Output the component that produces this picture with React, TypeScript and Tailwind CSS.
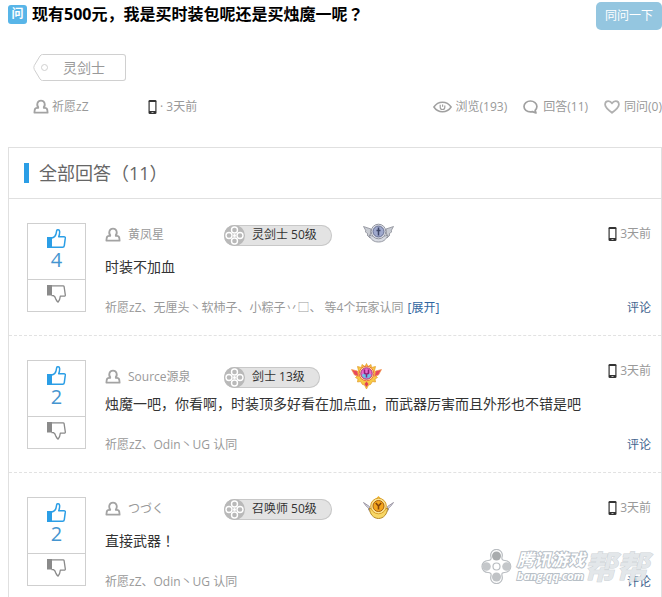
import type { ReactNode } from 'react';

type MedalKind = 'silver' | 'ruby' | 'gold';

interface Answer {
  id: number;
  author: string;
  role: string;
  medal: MedalKind;
  likes: number;
  content: string;
  agreed: string;
  expandable?: boolean;
}

const answers: Answer[] = [
  {
    id: 1,
    author: '黄凤星',
    role: '灵剑士 50级',
    medal: 'silver',
    likes: 4,
    content: '时装不加血',
    agreed: '祈愿zZ、无厘头丶软柿子、小粽子丷□、 等4个玩家认同',
    expandable: true,
  },
  {
    id: 2,
    author: 'Source源泉',
    role: '剑士 13级',
    medal: 'ruby',
    likes: 2,
    content: '烛魔一吧，你看啊，时装顶多好看在加点血，而武器厉害而且外形也不错是吧',
    agreed: '祈愿zZ、Odin丶UG 认同',
  },
  {
    id: 3,
    author: 'つづく',
    role: '召唤师 50级',
    medal: 'gold',
    likes: 2,
    content: '直接武器！',
    agreed: '祈愿zZ、Odin丶UG 认同',
  },
];

// Closing ！ and ？ are centred in their cell, which only the TC face does
function Centred({ text }: { text: string }) {
  return text.split(/([！？])/).map((part, i) =>
    i % 2 === 1 ? (
      <span key={i} lang="zh-TW" className="font-['Noto_Sans_CJK_TC',sans-serif] leading-none">{part}</span>
    ) : (
      part
    )
  );
}

function UserIcon() {
  return (
    <svg width="16" height="16" viewBox="0 0 16 16" fill="none" stroke="#a3a3a3" strokeWidth="1.800" strokeLinejoin="round" className="shrink-0">
      <path d="M5.600 9C4.300 7.700 3.900 6 4.500 4.100 5 2.500 6.200 1.600 8 1.600s3 .9 3.500 2.500c.6 1.900.2 3.600-1.100 4.900" />
      <path d="M5.800 8.900H4.200c-1.500 0-2.300.8-2.500 2.100l-.3 2.700h13.200l-.3-2.700c-.2-1.300-1-2.100-2.500-2.100h-1.600" />
    </svg>
  );
}

function PhoneIcon() {
  return (
    <svg width="9" height="14" viewBox="0 0 9 14" className="shrink-0">
      <rect x="0.5" y="0" width="8" height="14" rx="1.3" fill="#333" />
      <rect x="1.7" y="2" width="5.6" height="9" fill="#fff" />
      <rect x="3.5" y="12" width="2" height="1" fill="#bbb" />
    </svg>
  );
}

function EyeIcon() {
  return (
    <svg width="19" height="12" viewBox="0 0 19 12" fill="none" stroke="#a0a0a0" strokeWidth="1.5">
      <path d="M.9 6C3 2.800 6 1.200 9.500 1.200S16 2.800 18.100 6C16 9.200 13 10.800 9.500 10.800S3 9.200.9 6Z" />
      <path d="M7.200 3.800v2.400a2.300 2.300 0 0 0 4.600 0V4.400M9.600 3.600v2.200" strokeWidth="1.2" />
    </svg>
  );
}

function ChatIcon() {
  return (
    <svg width="16" height="14" viewBox="0 0 16 14" fill="none" stroke="#a0a0a0" strokeWidth="1.700" strokeLinejoin="round">
      <path d="M9.300 11.600C8.700 11.800 8.100 11.900 7.400 11.900 3.900 11.900 1 9.500 1 6.400S3.900 1 7.400 1s6.500 2.400 6.500 5.400c0 1.600-.7 2.900-1.800 3.900l.9 2.700Z" />
    </svg>
  );
}

function HeartIcon() {
  return (
    <svg width="16" height="14" viewBox="0 0 16 14" fill="none" stroke="#b0b0b0" strokeWidth="1.800" strokeLinejoin="round">
      <path d="M8 12.800C4.400 10.200 1.100 7.700 1.100 4.600 1.100 2.500 2.600 1.100 4.400 1.100 6 1.100 7.200 2 8 3.400 8.800 2 10 1.100 11.600 1.100c1.800 0 3.300 1.400 3.300 3.500 0 3.100-3.300 5.600-6.900 8.200Z" />
    </svg>
  );
}

function ThumbUpIcon() {
  return (
    <svg width="19" height="19" viewBox="0 0 19 19">
      <rect x="0" y="8" width="5" height="11" fill="#2b9ee6" />
      <path
        d="M5 9c2.200-.6 3.700-2.200 4.100-4.300L9.700 1.600C9.900.6 12.400.4 12.600 2.300c.2 1.700-.2 3.700-.9 5.400h5.300c1 0 1.400.6 1.300 1.500l-1 7.400c-.1.900-.7 1.600-1.700 1.600H5"
        fill="none"
        stroke="#2b9ee6"
        strokeWidth="1.500"
        strokeLinejoin="round"
      />
    </svg>
  );
}

function ThumbDownIcon() {
  return (
    <svg width="19" height="18" viewBox="0 0 19 18">
      <rect x="0" y="0" width="5" height="10.500" fill="#8a8a8a" />
      <path
        d="M4.500.8h11.600c.6 0 .9.200 1 .8l1.200 8.300c.1.800-.3 1.300-1.200 1.300h-3.800c-.2 2.400-.9 4.400-2.200 5.900-1-.7-1.800-1.500-2.200-2.800-.4-1.700-1.200-3-2.400-3.600H4.500"
        fill="none"
        stroke="#8a8a8a"
        strokeWidth="1.300"
        strokeLinejoin="round"
      />
    </svg>
  );
}

function RoleIcon() {
  return (
    <svg width="21" height="21" viewBox="0 0 21 21" className="shrink-0">
      <circle cx="10.500" cy="10.500" r="10.500" fill="#b9b9b9" />
      <g fill="#b9b9b9" stroke="#fff" strokeWidth="1.400">
        <circle cx="10.500" cy="5" r="3" />
        <circle cx="5" cy="10.500" r="3" />
        <circle cx="16" cy="10.500" r="3" />
        <circle cx="10.500" cy="16" r="3" />
      </g>
      <circle cx="10.500" cy="10.500" r="1.500" fill="#fff" />
    </svg>
  );
}

function Medal({ kind }: { kind: MedalKind }) {
  if (kind === 'silver') {
    return (
      <svg width="31" height="28" viewBox="0 0 31 28">
        <path d="M.5 5.500 8 8l-1 9-3-3 1-1-3-2.500 1-.5Z" fill="#c9ccd3" stroke="#8b8e98" strokeWidth=".8" />
        <path d="M30.500 5.500 23 8l1 9 3-3-1-1 3-2.500-1-.5Z" fill="#c9ccd3" stroke="#8b8e98" strokeWidth=".8" />
        <path d="M6 14c2 5 5 7 9.500 7s7.500-2 9.500-7l-3 1H9Z" fill="#d8dbe2" stroke="#8f929c" strokeWidth=".9" />
        <circle cx="15.500" cy="10.500" r="7.300" fill="#e4e6ec" stroke="#90939f" />
        <circle cx="15.500" cy="10.500" r="5.500" fill="#9fa9cd" stroke="#656d8f" />
        <path d="M15.500 6.500v8M13.500 9.500h4" stroke="#3c4566" strokeWidth="1.500" />
      </svg>
    );
  }
  if (kind === 'ruby') {
    return (
      <svg width="31" height="28" viewBox="0 0 31 28">
        <path
          d="m15.500.5 1.500 3 3-2 .5 3 4-1-1 4 3 3-2 2 2 2-2.500 1.500.5 3-3-.5-2 3-2 .5-2 4-2-4-2-.5-2-3-3 .5.500-3L4.500 14.500l2-2-2-2 3-3-1-4 4 1 .5-3 3 2Z"
          fill="#f6c945"
          stroke="#e49a24"
          strokeWidth=".7"
        />
        <path d="m.5 6.500 6 1.500 1 5.500-4-1.500Z" fill="#e8485c" stroke="#f3a04a" strokeWidth=".7" />
        <path d="m30.500 6.500-6 1.500-1 5.500 4-1.500Z" fill="#e8485c" stroke="#f3a04a" strokeWidth=".7" />
        <circle cx="15.500" cy="10.500" r="7.300" fill="#ffe99a" stroke="#ed6f44" />
        <circle cx="15.500" cy="10.500" r="5.700" fill="#e86acb" stroke="#a5367f" />
        <path d="M10.800 12a5 5 0 0 0 9.400 0l-2-1.500h-5.400Z" fill="#6cc5e8" />
        <path d="M13.500 6.500v3q0 1.500 2 1.500t2-1.500v-3M15.500 11v3.500" fill="none" stroke="#8e2277" strokeWidth="1.500" />
        <path d="m15.500 18.500 2 2.500-2 3-2-3Z" fill="#e23e55" />
      </svg>
    );
  }
  return (
    <svg width="31" height="28" viewBox="0 0 31 28">
      <path d="m.5 7.500 6 4 2 6-3-2.500v-2l-2-1.500Z" fill="#d9d9e4" stroke="#8d8796" strokeWidth=".8" />
      <path d="m30.500 7.500-6 4-2 6 3-2.500v-2l2-1.500Z" fill="#d9d9e4" stroke="#8d8796" strokeWidth=".8" />
      <path d="M6.500 13c0 6 4 10.500 9 10.500s9-4.500 9-10.500l-4 2H10Z" fill="#f7d765" stroke="#b78a27" />
      <path d="m15.500 1 2.500 2.500h-5Z" fill="#f0b52c" />
      <circle cx="15.500" cy="11" r="7.800" fill="#fbe391" stroke="#d99f2b" />
      <circle cx="15.500" cy="11" r="5.500" fill="#f4a51e" stroke="#a8600f" />
      <path d="m12.800 8 2.700 3 2.700-3M15.500 11v3.500" fill="none" stroke="#84460b" strokeWidth="1.600" />
    </svg>
  );
}

function Stat({ icon, children }: { icon: ReactNode; children: ReactNode }) {
  return (
    <span className="flex items-center gap-1">
      {icon}
      {children}
    </span>
  );
}

function VoteBox({ likes }: { likes: number }) {
  return (
    <div className="flex h-[89px] w-[59px] shrink-0 flex-col border border-[#cfcfcf]">
      <button type="button" aria-label="赞同" className="flex h-14 flex-col items-center border-b border-[#cfcfcf] pt-[5px] text-xl leading-6 text-[#4595d0]">
        <ThumbUpIcon />
        {likes}
      </button>
      <button type="button" aria-label="反对" className="flex grow justify-center pt-[5px]">
        <ThumbDownIcon />
      </button>
    </div>
  );
}

function AnswerItem({ answer }: { answer: Answer }) {
  return (
    <li className="flex h-[137px] border-b border-dashed border-[#e2e2e2] pr-[10px] pl-[18px]">
      <div className="pt-6">
        <VoteBox likes={answer.likes} />
      </div>
      <div className="ml-[19px] min-w-0 grow pt-4">
        <div className="flex h-10 justify-between">
          <div className={answer.medal === 'ruby' ? 'flex items-center pt-[10px]' : 'flex items-center'}>
            <div className="flex w-[119px] items-center gap-[7px] text-[#999]">
              <UserIcon />
              {answer.author}
            </div>
            <div className="mr-[31px] flex h-[21px] items-center gap-[7px] rounded-full bg-[#e3e3e3] pr-[15px] text-[#333] ring-1 ring-[#c8c8c8] ring-inset">
              <RoleIcon />
              {answer.role}
            </div>
            <Medal kind={answer.medal} />
          </div>
          <div className="flex h-[38px] items-center gap-[3px] text-[#999]">
            <PhoneIcon />
            3天前
          </div>
        </div>
        <p className="h-6 text-sm leading-6 text-[#333]">
          <Centred text={answer.content} />
        </p>
        <div className="mt-[19px] flex justify-between leading-5 text-[#999]">
          <p>
            {answer.agreed}
            {answer.expandable && (
              <a href="#expand" className="ml-1 text-[#2f65a0]">[展开]</a>
            )}
          </p>
          <a href="#comment" className="text-[#44658f]">评论</a>
        </div>
      </div>
    </li>
  );
}

function Watermark() {
  return (
    <div className="pointer-events-none absolute right-[14px] bottom-[13px] flex items-center gap-[3px]">
      <svg width="35" height="35" viewBox="0 0 35 35">
        <g fill="#fff" stroke="#b9bdc1" strokeWidth="1.200">
          <path d="M12 8a5.800 5.800 0 1 1 11 0c-.5 2.500.5 3.500 3 3.500a6 6 0 1 1-.5 12c-2 0-3 .5-2.500 3.500a5.800 5.800 0 1 1-11 0c.5-2.500-.5-3.500-3-3.500a6 6 0 1 1 0-12c2.500 0 3.500-1 3-3.500Z" />
          <circle cx="17.500" cy="17.500" r="3.500" />
        </g>
        <circle cx="17.500" cy="7" r="4.500" fill="#a9acae" />
        <circle cx="7.500" cy="17.500" r="4.300" fill="#c4c7ca" />
        <circle cx="27.500" cy="17.500" r="4.300" fill="#c4c7ca" />
        <circle cx="17.500" cy="28" r="4.500" fill="#c0c3c6" />
      </svg>
      <div className="font-bold text-white italic [-webkit-text-stroke:2px_#b8c0c7] [paint-order:stroke_fill]">
        <div className="text-[17px] leading-[18px]">腾讯游戏</div>
        <div className="text-[11px] leading-[14px]">bang.qq.com</div>
      </div>
      <div className="-ml-1 text-[32px] leading-8 font-bold text-[#e3e7ea] italic [-webkit-text-stroke:1px_#cdd2d6] [paint-order:stroke_fill]">帮帮</div>
    </div>
  );
}

export default function App() {
  return (
    <div className="relative h-screen overflow-hidden bg-white pt-[2px] pl-2 font-['Open_Sans','Noto_Sans_CJK_SC',sans-serif] text-xs">
      <header className="flex items-start justify-between">
        <div className="flex items-center gap-[5px]">
          <span className="flex size-[19px] items-center justify-center rounded-[3px] bg-[#58b5e8] font-bold text-white">问</span>
          <h1 className="text-base font-bold text-black">
            <Centred text="现有500元，我是买时装包呢还是买烛魔一呢？" />
          </h1>
        </div>
        <button type="button" className="h-7 rounded-[5px] bg-[#94c6e0] px-[9px] text-white">同问一下</button>
      </header>

      <a href="#tag" className="mt-6 ml-[25px] flex h-[27px] w-fit text-sm text-[#999]">
        <svg width="18" height="27" viewBox="0 0 18 27" fill="#fff" stroke="#d0d0d0">
          <path d="M18 .5H9.500Q8 .5 7 2L1.300 11.500Q.3 13.500 1.300 15.500L7 25Q8 26.500 9.500 26.500H18" />
          <circle cx="11.500" cy="13.500" r="3" />
        </svg>
        <span className="flex items-center rounded-r-[3px] border border-l-0 border-[#d0d0d0] pr-5 pl-3">灵剑士</span>
      </a>

      <div className="mt-4 flex h-5 items-center justify-between pl-[25px] text-[#999]">
        <div className="flex items-center">
          <div className="flex w-[115px] items-center gap-[3px]">
            <UserIcon />
            祈愿zZ
          </div>
          <div className="flex items-center gap-[3px]">
            <PhoneIcon />
            <span>· 3天前</span>
          </div>
        </div>
        <div className="flex items-center gap-4">
          <Stat icon={<EyeIcon />}>浏览(193)</Stat>
          <Stat icon={<ChatIcon />}>回答(11)</Stat>
          <Stat icon={<HeartIcon />}>同问(0)</Stat>
        </div>
      </div>

      <section className="mt-[30px] border border-[#e0e0e0]">
        <div className="flex h-[51px] items-center gap-[10px] border-b border-[#e0e0e0] pl-[15px]">
          <span className="h-5 w-[5px] bg-[#2b9ee6]" />
          <h2 className="text-lg text-[#666]">全部回答（11）</h2>
        </div>
        <ul>
          {answers.map((answer) => (
            <AnswerItem key={answer.id} answer={answer} />
          ))}
        </ul>
      </section>

      <Watermark />
    </div>
  );
}
